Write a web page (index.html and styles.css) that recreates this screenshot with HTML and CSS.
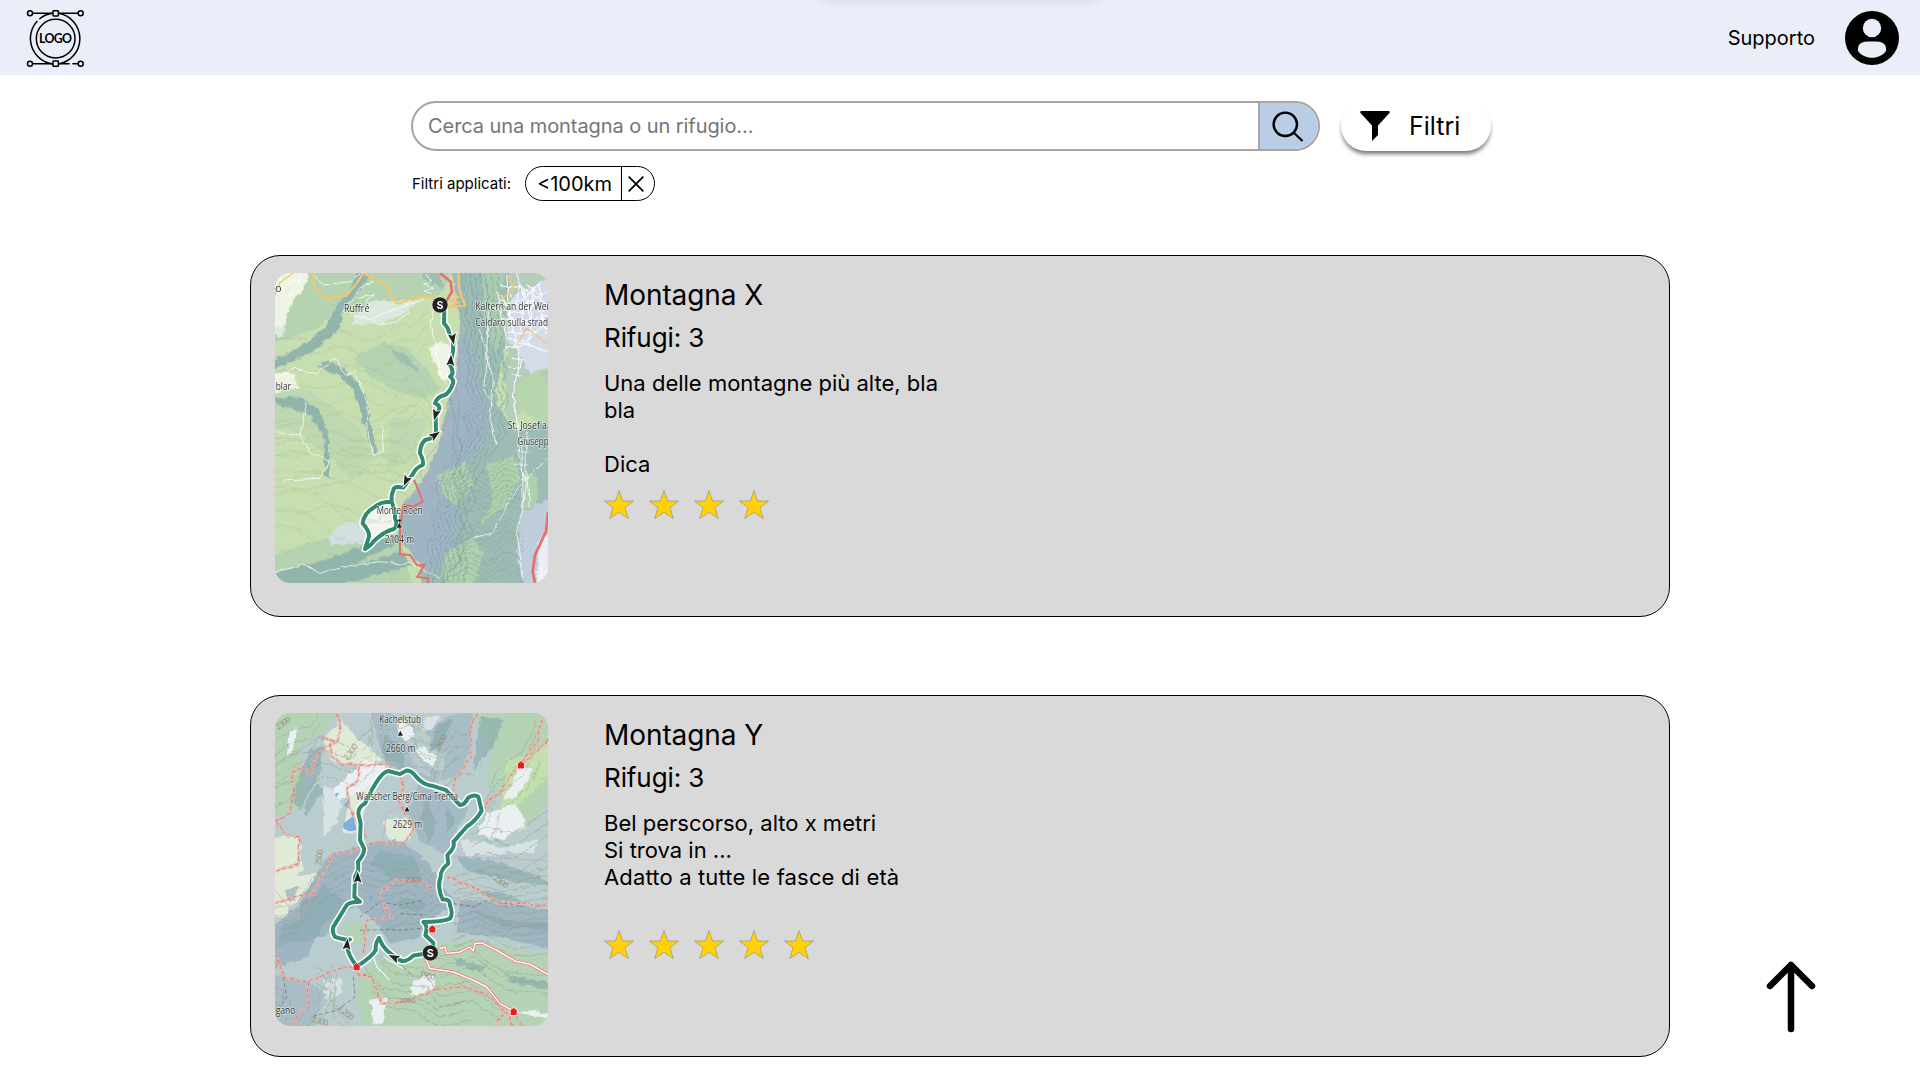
FILE: index.html
```html
<!DOCTYPE html>
<html lang="it">
<head>
<meta charset="utf-8">
<title>Montagne e rifugi</title>
<link rel="stylesheet" href="styles.css">
</head>
<body>
<svg class="defs" width="0" height="0" aria-hidden="true">
  <defs>
  <filter id="relief" x="-5%" y="-5%" width="110%" height="110%"><feTurbulence type="fractalNoise" baseFrequency=".05" numOctaves="3" seed="4"/><feDisplacementMap in="SourceGraphic" scale="18" xChannelSelector="R" yChannelSelector="G"/><feGaussianBlur stdDeviation=".6"/></filter>
  <filter id="wobble" x="-5%" y="-5%" width="110%" height="110%"><feTurbulence type="fractalNoise" baseFrequency=".035" numOctaves="2" seed="9"/><feDisplacementMap in="SourceGraphic" scale="14" xChannelSelector="R" yChannelSelector="G"/></filter>
  <symbol id="star" viewBox="0 0 30 30"><path d="M15 .6 18.600 11H29.600L21 17.600 24.300 28.600 15 22.300 5.700 28.600 9 17.600 .4 11H11.400Z" fill="#ffd106" stroke="#8f8a70" stroke-width=".6"/></symbol>
  <circle id="start" r="24" fill="#222" stroke="#fff" stroke-opacity=".5" stroke-width="3"/>
  <path id="dir" d="M0-19 12 14 0 8-12 14Z" fill="#222" stroke="#fff" stroke-width="5" paint-order="stroke"/>
  <path id="hut" d="M0-12 12-2H9V10H-9V-2H-12Z" fill="#e5201b" stroke="#fff" stroke-width="3" paint-order="stroke"/>
  <path id="peak" d="M0-8 8 7H-8Z" fill="#222" stroke="#fff" stroke-width="3" paint-order="stroke"/>
  </defs>
</svg>

<header class="topbar">
  <svg class="logo" viewBox="0 0 180 180" fill="none" stroke="#000" stroke-width="4.500">
    <path d="M23 13H84M100 13H159M23 164H84M100 164H134M142 164H159"/>
    <path d="M37 36A77 77 0 0 0 84 165M100 165A77 77 0 0 0 100 13M84 13A77 77 0 0 0 43 30"/>
    <circle cx="92" cy="89" r="58"/>
    <circle cx="15" cy="13" r="7.500"/><circle cx="167" cy="13" r="7.500"/>
    <circle cx="15" cy="164" r="7.500"/><circle cx="167" cy="164" r="7.500"/>
    <rect x="84" y="5" width="16" height="16" rx="2"/><rect x="84" y="156" width="16" height="16" rx="2"/>
    <text x="42" y="102" textLength="99" class="logo-text">LOGO</text>
  </svg>
  <div class="drawer-edge"></div>
  <nav class="account">
    <a class="support">Supporto</a>
    <svg class="avatar" viewBox="0 0 54 54"><circle cx="27" cy="27" r="27"/><circle cx="27" cy="17" r="9.200" fill="#e9eef9"/><path d="M13 40C12 34 16 30.500 22 30.500H32C38 30.500 42 34 41 40 35 49 19 49 13 40Z" fill="#e9eef9"/></svg>
  </nav>
</header>

<main>
  <section class="tools">
    <div class="search-row">
      <div class="search">
        <span class="placeholder">Cerca una montagna o un rifugio...</span>
        <span class="search-btn"><svg width="32" height="32" viewBox="0 0 32 32" fill="none" stroke="#000" stroke-width="2.400"><circle cx="13.300" cy="13.300" r="11.700"/><path d="M21 21 30.500 30"/></svg></span>
      </div>
      <button class="filter-btn"><svg width="30" height="30" viewBox="0 0 30 30"><path d="M1 0H29Q30.500 1 29 2.500L18 14.500V24L12 30V14.500L1 2.500Q-.5 1 1 0Z"/></svg><span>Filtri</span></button>
    </div>
    <div class="applied">
      <span class="applied-label">Filtri applicati:</span>
      <span class="chip"><span class="chip-text">&lt;100km</span><span class="chip-x"><svg width="16" height="16" viewBox="0 0 16 16" stroke="#000" stroke-width="1.800"><path d="M.7.7 15.300 15.300M15.300.7.7 15.300"/></svg></span></span>
    </div>
  </section>

  <article class="card">
    <svg class="map map-x" viewBox="105 84 819 930" fill="none" preserveAspectRatio="none">
      <rect x="105" y="84" width="819" height="930" fill="#c6deb0"/>
      <!-- valleys and shaded woodland -->
      <g filter="url(#relief)">
      <g fill="#b5d3b1">
        <path d="M90 70H640L600 150 540 160 420 180 300 190 230 250 90 300Z"/>
        <path d="M90 440 190 430 270 480 350 540 400 640 330 700 260 620 170 560 90 540Z" opacity=".5"/>
        <path d="M340 340 430 290 500 310 560 370 600 430 560 460 470 440 400 400Z"/>
        <path d="M90 930 250 880 370 900 480 870 520 1030H90Z"/>
        <path d="M450 520 560 520 520 640 440 680Z" opacity=".5"/>
      </g>
      <g fill="#8fb5ad">
        <path d="M350 70 390 90 350 150 310 190 300 250 220 320 90 380V350L190 300 260 240 290 180 330 140Z"/>
        <path d="M260 345 310 370 350 410 380 460 395 550 415 630 400 620 370 530 345 440 300 390 235 365Z"/>
        <path d="M90 460 180 455 240 500 265 560 270 700 255 690 250 570 210 510 90 470Z"/>
        <path d="M440 300 500 330 540 385 480 350Z" opacity=".6"/>
        <path d="M90 985 270 940 400 890 470 870 480 890 400 930 330 960 380 950 480 920 520 960 260 1030H90Z"/>
        <path d="M540 70H600L610 130 560 110Z" opacity=".6"/>
      </g>
      <path d="M90 70H215L190 130 150 180 130 250 90 250ZM90 385 150 380 180 430 90 445ZM565 305 615 290 640 320 620 410 600 400Z" fill="#eef4e4"/>
      <path d="M390 170 540 165 500 200 430 235 340 240 340 215ZM105 250 140 240 130 270 105 280Z" fill="#dbe8df"/>
      <path d="M265 875 300 840 370 820 400 850 440 850 400 900 350 895 270 900Z" fill="#d3e0e2"/>
      <path d="M385 800 450 765 475 820 440 865 400 890 370 850Z" fill="#f2f4ee"/>
      <!-- eastern escarpment -->
      <path d="M635 70H830L800 200 790 330 760 450 820 560 940 520V1030H545L540 960 470 870 480 790 560 690 600 590 625 470 655 380 660 230Z" fill="#9dbcb5"/>
      <path d="M660 240 700 330 720 430 760 520 720 600 680 660 650 720 660 830 640 930 560 990 500 900 485 800 555 700 600 585 640 450Z" fill="#a0b5c3"/>
      <path d="M720 70H800L780 160 800 260 770 330 730 230ZM800 330 830 380 800 420 780 380Z" fill="#a9cbb0"/>
      <path d="M590 690 680 650 700 720 650 780 605 750ZM740 660 820 630 840 700 800 780 720 840 760 760ZM850 680 895 700 890 780 850 790ZM620 920 700 880 730 930 700 1030H600Z" fill="#afd0ad"/>
      <path d="M810 70H940V560L860 480 810 540 790 470 810 360 790 260Z" fill="#b5ceba"/>
      <path d="M820 150 940 95V360L870 390 840 330 800 280 810 200Z" fill="#d4dcea"/>
      <path d="M830 420 900 370 925 430V540L830 490Z" fill="#b8d6ad"/>
      <path d="M840 800 940 760V1030H850L830 920Z" fill="#bfcddd"/>
      <path d="M895 890 940 850V1030H890Z" fill="#ebeef6"/>
      </g>
      <!-- contour lines -->
      <g filter="url(#relief)">
      <g stroke="#a8b990" stroke-width="2" stroke-opacity=".6">
        <path id="cx" d="M90 300C160 250 200 310 260 270S350 300 400 285 460 230 500 240 540 210 560 200M90 400C160 340 220 410 310 370S460 440 500 400 560 430 590 460M90 520C160 460 240 500 300 560S440 560 490 600 520 580 540 560"/>
        <use href="#cx" y="45"/><use href="#cx" y="95"/><use href="#cx" y="245"/><use href="#cx" x="-30" y="300"/><use href="#cx" x="-50" y="350"/><use href="#cx" x="-80" y="420"/>
      </g>
      <g stroke="#7898a1" stroke-width="2" stroke-opacity=".85">
        <path id="ex" d="M660 70 672 150 664 210 680 260 668 320 690 370 678 420 700 470 670 520 690 560 660 610 630 640 610 700 585 720 600 770 570 810 590 860 560 900 575 960 560 1030"/>
        <use href="#ex" x="14"/><use href="#ex" x="28"/><use href="#ex" x="42"/><use href="#ex" x="56"/><use href="#ex" x="72"/><use href="#ex" x="90"/><use href="#ex" x="108"/><use href="#ex" x="-14" y="350"/><use href="#ex" x="-28" y="380"/>
      </g>
      <g stroke="#91a99a" stroke-width="2">
        <path id="gx" d="M640 700 700 660 740 690 790 640 830 650M650 750 690 730 740 760 800 720 850 730M660 860 720 830 760 860 810 820 850 860M620 950 690 920 740 950 800 920 850 950"/>
        <use href="#gx" y="16"/><use href="#gx" y="32"/><use href="#gx" y="48"/><use href="#gx" y="64"/>
      </g>
      </g>
      <!-- local roads -->
      <g filter="url(#wobble)">
      <g stroke="#fff" stroke-width="2.600" stroke-opacity=".85">
        <path d="M105 400 165 370 230 385 285 340 320 395 345 375 380 470 385 570 400 630 430 620 425 540"/>
        <path d="M215 84 250 120 330 110 370 84M330 210 390 220 460 195 550 165M390 220 420 240 470 230 510 200M580 190 570 240 590 300 600 380 620 420M555 84 575 110 550 115 578 130 552 138 575 145"/>
        <path d="M105 90 140 120 185 95 150 150 195 130 160 100M120 84 130 160 105 140M310 200 360 130 400 110M350 160 405 150 375 175"/>
        <path d="M745 200 740 340 760 410 750 520 770 600M720 250 745 330 730 430 760 480"/>
        <path d="M105 560 180 570 210 620 270 650 240 700 130 705M105 980 190 960 240 985 340 960 420 950 520 960 600 1000M180 570 200 470"/>
        <path d="M700 880 760 860 800 780 840 720 920 640M835 560 840 650 860 720 830 860 850 1000M845 580 850 790M862 560 855 640 870 790M830 620H870M825 660H865M835 700H862"/>
      </g>
      <g stroke="#fff" stroke-width="3">
        <path d="M780 120 850 130 924 180M770 160 830 190 924 140M800 90 810 220 840 330 820 450 835 560M850 130 870 220 924 250M790 200 850 160 910 110M800 240 924 210M830 84 850 150 900 200 924 270M770 140 800 280 924 320M880 130 870 290M900 120 910 230M795 310 850 300 910 240M760 190 850 205M815 340 845 345 840 370 805 365M815 390H840M780 150 830 250M840 110 830 180 890 175M860 120 900 150"/>
        <path d="M780 180 820 170M790 220 880 240M805 265 890 260M810 150 850 200 840 260M820 310 835 280 870 300M885 985 905 970 900 1000M905 1000 924 975"/>
      </g>
      </g>
      <!-- main roads -->
      <g stroke="#f5c66b" stroke-width="6" stroke-linejoin="round">
        <path d="M215 84 225 130 265 168 280 155 320 152 350 115 370 84 440 120 460 165 475 177 520 157 580 155 600 170M655 84 657 130 675 182 625 185 655 172 630 168 655 155 640 150"/>
        <path d="M160 84 120 112 105 150M805 90 820 130 785 165M830 300 860 250 924 298" stroke-width="4"/>
      </g>
      <g stroke="#e96f6a" stroke-width="8">
        <path d="M600 84 632 110 636 140 618 170"/>
        <path d="M522 705 535 735 548 770 520 785 490 780 480 850 480 928 510 930 532 962 554 958 532 996 564 1000V1014" stroke-width="6"/>
        <path d="M924 800 918 860 885 930 878 980 885 1014"/>
      </g>
      <path d="M655 310 660 400 620 480 625 510 600 590 560 640 540 690 583 740 570 765" stroke="#c98fb2" stroke-width="2"/>
      <!-- hiking trail -->
      <g stroke-linejoin="round" stroke-linecap="round">
        <path id="trail-x" class="casing" d="M613 190 612 235Q627 250 627 265L640 290 639 320 630 360Q645 385 630 395 645 405 637 420 630 440 615 450 590 455 585 475 600 480 598 492L587 515 588 560Q585 580 555 585 540 600 540 625 553 650 548 660 525 670 520 685L490 728Q462 722 460 735 453 750 455 770 420 770 405 785 370 805 368 835 390 860 387 875L375 912Q395 900 400 890 430 860 462 852 475 840 465 820L465 800 455 770"/>
        <path class="track" d="M613 190 612 235Q627 250 627 265L640 290 639 320 630 360Q645 385 630 395 645 405 637 420 630 440 615 450 590 455 585 475 600 480 598 492L587 515 588 560Q585 580 555 585 540 600 540 625 553 650 548 660 525 670 520 685L490 728Q462 722 460 735 453 750 455 770 420 770 405 785 370 805 368 835 390 860 387 875L375 912Q395 900 400 890 430 860 462 852 475 840 465 820L465 800 455 770"/>
      </g>
      <use href="#dir" transform="translate(638 280) rotate(170)"/>
      <use href="#dir" transform="translate(632 348) rotate(5)"/>
      <use href="#dir" transform="translate(587 508) rotate(195)"/>
      <use href="#dir" transform="translate(584 571) rotate(55)"/>
      <use href="#dir" transform="translate(499 706) rotate(205)"/>
      <use href="#start" x="600" y="180"/><text x="600" y="191" text-anchor="middle" class="start-letter">S</text>
      <path d="M478 823V850M472 826H484" stroke="#222" stroke-width="3"/><use href="#peak" x="478" y="841"/>
      <g class="place">
        <text x="105" y="142">o</text>
        <text x="312" y="200" textLength="76" lengthAdjust="spacingAndGlyphs">Ruffré</text>
        <text x="706" y="195" textLength="236" lengthAdjust="spacingAndGlyphs">Kaltern an der Wein</text>
        <text x="706" y="242" textLength="232" lengthAdjust="spacingAndGlyphs">Caldaro sulla strada</text>
        <text x="107" y="434" textLength="46" lengthAdjust="spacingAndGlyphs">blar</text>
        <text x="803" y="552" textLength="118" lengthAdjust="spacingAndGlyphs">St. Josef a</text>
        <text x="832" y="600" textLength="108" lengthAdjust="spacingAndGlyphs">Giuseppe</text>
        <text x="410" y="806" textLength="137" lengthAdjust="spacingAndGlyphs">Monte Roen</text>
        <text x="434" y="893" textLength="88" lengthAdjust="spacingAndGlyphs">2104 m</text>
      </g>
    </svg>
    <div class="info">
      <h2>Montagna X</h2>
      <h3>Rifugi: 3</h3>
      <p>Una delle montagne più alte, bla<br>bla<br><br>Dica</p>
      <div class="stars"><svg><use href="#star"/></svg><svg><use href="#star"/></svg><svg><use href="#star"/></svg><svg><use href="#star"/></svg></div>
    </div>
  </article>

  <article class="card">
    <svg class="map map-y" viewBox="105 69 819 938" fill="none" preserveAspectRatio="none">
      <rect x="105" y="69" width="819" height="938" fill="#b9cdcf"/>
      <!-- meadows, scree and rock -->
      <g filter="url(#relief)">
      <g fill="#b4d2b4">
        <path d="M90 55H290L260 120 190 160 150 220 90 250Z"/>
        <path d="M700 55H940V330L850 420 760 390 790 330 740 280 760 180 720 130Z"/>
        <path d="M590 760 700 750 940 800V1020H380L340 900 380 830 460 800Z"/>
        <path d="M430 560 500 600 520 640 440 680 410 620ZM310 700 400 690 370 760 330 760ZM90 220 180 190 200 340 90 390Z"/>
      </g>
      <g fill="#e0ebd7">
        <path d="M300 90 360 150 430 210 360 230 270 210 250 150ZM90 440 175 440 190 540 140 570 90 560ZM330 300 400 290 350 430 310 430ZM430 390 520 380 510 450 450 460ZM90 560 240 550 200 600 130 680 90 680Z"/>
        <path d="M800 210 850 200 940 150V240L840 340 780 370Z" fill="#c4dfae"/>
      </g>
      <g fill="#eaf0f2">
        <path d="M370 210 440 230 390 290 350 310 300 330 280 300ZM510 190 550 170 590 200 570 260 520 240ZM740 370 830 340 860 410 780 450 710 430ZM480 90 530 130 510 150 470 140ZM840 230 880 240 830 320 790 330ZM520 870 580 850 590 890 510 920ZM390 930 440 920 430 1000H400ZM880 960 940 970V985L830 970ZM150 120 175 110 160 170 140 200Z"/>
        <path d="M250 290 310 310 290 400 250 440ZM660 450 750 460 800 490 680 500ZM560 80 600 75 570 130 545 120ZM740 480 900 450 880 490ZM250 870 300 860 310 910 260 930ZM390 590 430 580 400 640 370 640Z" opacity=".6"/>
      </g>
      <g fill="#9fb6c2">
        <path d="M390 55H450L480 140 540 200 600 250 580 290 490 230 430 200 410 140Z" opacity=".7"/>
        <path d="M560 130 620 80 700 55 690 170 660 260 600 270 620 190 580 180Z" opacity=".65"/>
        <path d="M260 500 380 460 480 450 560 510 600 580 650 640 560 700 420 710 350 650 250 700 200 800 90 840V720L180 640Z"/>
        <path d="M540 270 690 350 640 440 620 500 540 450 500 370Z" opacity=".8"/>
        <path d="M660 630 800 640 940 660V780L780 740 650 730Z"/>
        <path d="M90 850 200 870 260 910 210 1020H90Z" opacity=".7"/>
      </g>
      <g fill="#87a9ad" opacity=".6">
        <path d="M440 130 480 170 500 240 450 230 425 190ZM590 100 640 90 600 170 570 190ZM180 640 250 590 330 640 270 730 180 760ZM420 480 520 500 550 580 460 570 390 520ZM650 500 760 510 900 560 940 590 800 570 680 540ZM690 660 800 690 940 700V720L790 710ZM210 180 250 170 240 250 180 360 150 330ZM420 710 550 690 540 740 450 760Z"/>
        <path d="M720 80 790 90 760 170 700 240ZM130 700 250 680 210 740 110 770ZM790 850 940 880V900L820 880ZM560 320 590 400 570 460 540 380ZM620 350 650 390 620 430ZM130 600 180 590 150 640ZM480 620 560 640 540 670 470 650ZM720 600 800 610 860 640 760 630ZM640 800 740 830 720 850 650 820ZM230 280 250 300 200 380 190 350Z"/>
      </g>
      </g>
      <path d="M310 400 340 378 350 420 330 424 310 415ZM312 345 330 320 325 355ZM285 310 298 308 288 322Z" fill="#7eaee0"/>
      <path d="M393 610 400 622 393 632 386 622Z" fill="#7eaee0"/>
      <!-- contour lines -->
      <g filter="url(#relief)" stroke="#8f9c87" stroke-width="2" stroke-opacity=".7">
        <path id="cy" d="M90 170 150 120 210 110 240 60M90 230 180 180 240 140 330 170 390 120 400 60M420 60 440 120 520 110 570 130M510 60 540 110 590 130 640 80M580 240 600 170 650 130 690 140M740 330 770 240 850 180 890 90M690 430 740 410 820 430 940 350"/>
        <use href="#cy" y="38"/><use href="#cy" y="76"/><use href="#cy" x="14" y="118"/>
        <path id="dy" d="M640 560 720 540 790 560 940 530M640 610 720 600 800 650 940 640M640 680 720 660 820 710 940 700M430 640 500 600 560 650 600 620M90 660 170 640 220 560 330 500 430 530 520 510 580 560"/>
        <use href="#dy" y="22"/><use href="#dy" y="44"/><use href="#dy" y="66"/><use href="#dy" y="88"/>
        <path id="fy" d="M410 800 460 850 560 860 600 920 700 900 780 960M390 860 440 920 520 930 600 980 690 960M600 830 700 800 800 870 940 880M230 850 280 880 260 930 190 1020M290 850 280 950 330 1000M90 900 150 930 130 980"/>
        <use href="#fy" y="30"/><use href="#fy" x="-14" y="-26"/>
      </g>
      <path d="M105 600 180 690 250 560M430 440 440 370 490 345M520 410 580 470 640 498 924 512" stroke="#c9a0cb" stroke-width="2"/>
      <path d="M480 670 560 675M360 680 420 635 480 645 550 630M360 720 440 718 480 720 550 714M640 640 700 650 740 630 800 640 850 650M340 860 345 920 290 960 210 980M130 860 140 920 120 950M490 830 520 860" stroke="#667" stroke-width="2" stroke-dasharray="12 7"/>
      <!-- secondary trails -->
      <g stroke-linejoin="round" filter="url(#wobble)">
        <path stroke="#f3b2aa" stroke-opacity=".65" stroke-width="9" d="M290 69 303 120 290 155 240 143M290 155 240 180 210 250 190 230 155 245 160 320 150 370 105 390 140 435 180 440 175 520 105 545M270 160 275 200 310 225 370 225 440 220 480 260 490 290 480 330 490 370 520 400 510 440 480 465 410 455 360 470 330 480 275 500 240 570 220 610 170 620 105 640M360 230 355 270 320 300 330 350 345 380 380 440M710 69 690 130 695 200 650 260 640 310M910 69 895 150 842 220 770 320 745 330 730 370M924 150 850 220M412 610 470 570 530 570 580 595M412 610 455 680 380 690 370 790M620 560 700 590 780 640 850 640 924 650M105 790 130 860 205 875 310 830 360 835M205 875 205 940 150 1007M350 850 395 860 425 940 510 930 590 895 670 890 750 920 805 975 820 1007M790 970 765 1007M830 980 850 1007"/>
        <path stroke="#cc7573" stroke-width="2.500" stroke-dasharray="12 7" d="M290 69 303 120 290 155 240 143M290 155 240 180 210 250 190 230 155 245 160 320 150 370 105 390 140 435 180 440 175 520 105 545M270 160 275 200 310 225 370 225 440 220 480 260 490 290 480 330 490 370 520 400 510 440 480 465 410 455 360 470 330 480 275 500 240 570 220 610 170 620 105 640M360 230 355 270 320 300 330 350 345 380 380 440M710 69 690 130 695 200 650 260 640 310M910 69 895 150 842 220 770 320 745 330 730 370M924 150 850 220M412 610 470 570 530 570 580 595M412 610 455 680 380 690 370 790M620 560 700 590 780 640 850 640 924 650M105 790 130 860 205 875 310 830 360 835M205 875 205 940 150 1007M350 850 395 860 425 940 510 930 590 895 670 890 750 920 805 975 820 1007M790 970 765 1007M830 980 850 1007"/>
      </g>
      <g stroke-linejoin="round">
        <path d="M550 790 570 835 640 845 700 870 740 890 780 940 820 962M600 775 615 770 620 790 660 785 690 770 700 782 705 760 725 758 770 780 825 812 870 822 924 852" stroke="#f3b2aa" stroke-opacity=".6" stroke-width="14"/>
        <path d="M550 790 570 835 640 845 700 870 740 890 780 940 820 962M600 775 615 770 620 790 660 785 690 770 700 782 705 760 725 758 770 780 825 812 870 822 924 852" stroke="#c77672" stroke-width="8"/>
        <path d="M550 790 570 835 640 845 700 870 740 890 780 940 820 962M600 775 615 770 620 790 660 785 690 770 700 782 705 760 725 758 770 780 825 812 870 822 924 852" stroke="#fff" stroke-width="4.500"/>
        <path d="M395 780 410 830 450 870M430 800 490 835" stroke="#fff" stroke-width="3"/>
      </g>
      <!-- hiking trail -->
      <g stroke-linejoin="round" stroke-linecap="round">
        <path class="casing" d="M570 788 520 796Q500 815 485 812L470 805 440 780Q425 765 417 743 405 760 407 780 395 800 352 828 325 800 322 770 315 750 330 748 315 750 285 740 275 725 280 710L320 645Q330 635 360 635L343 620 345 560 355 540 354 515Q375 490 372 475L360 450 362 400 355 370Q355 350 375 340L395 300 410 275Q430 245 445 243L480 252 500 241Q515 240 530 262 550 285 580 288L618 300Q645 330 660 345 675 345 685 322 705 312 715 320L725 362Q710 390 680 410L640 455Q648 470 622 495L625 520Q600 540 602 560 590 590 608 628 630 625 630 645 640 670 630 685 605 695 550 695 565 705 556 735L580 758 580 775"/>
        <path class="track" d="M570 788 520 796Q500 815 485 812L470 805 440 780Q425 765 417 743 405 760 407 780 395 800 352 828 325 800 322 770 315 750 330 748 315 750 285 740 275 725 280 710L320 645Q330 635 360 635L343 620 345 560 355 540 354 515Q375 490 372 475L360 450 362 400 355 370Q355 350 375 340L395 300 410 275Q430 245 445 243L480 252 500 241Q515 240 530 262 550 285 580 288L618 300Q645 330 660 345 675 345 685 322 705 312 715 320L725 362Q710 390 680 410L640 455Q648 470 622 495L625 520Q600 540 602 560 590 590 608 628 630 625 630 645 640 670 630 685 605 695 550 695 565 705 556 735L580 758 580 775"/>
      </g>
      <use href="#dir" transform="translate(353 564)"/>
      <use href="#dir" transform="translate(321 764) rotate(6)"/>
      <use href="#dir" transform="translate(463 802) rotate(-65)"/>
      <use href="#start" x="571" y="788"/><text x="571" y="799" text-anchor="middle" class="start-letter">S</text>
      <use href="#hut" x="843" y="225"/><use href="#hut" x="577" y="717"/><use href="#hut" x="350" y="830"/><use href="#hut" x="821" y="964"/>
      <use href="#peak" x="481" y="130"/><use href="#peak" x="501" y="357"/>
      <g class="alt">
        <text transform="translate(114 120) rotate(-35)">2300</text><text transform="translate(322 212) rotate(-52)">2,300</text><text transform="translate(598 182) rotate(-60)">2600</text><text transform="translate(242 527) rotate(-82)">2500</text><text x="496" y="575">2300</text><text transform="translate(758 567) rotate(35)">2300</text><text transform="translate(536 857) rotate(15)">1900</text><text x="477" y="939">2000</text><text transform="translate(292 957) rotate(40)">1,200</text><text transform="translate(215 994) rotate(15)">2300</text>
      </g>
      <g class="place">
        <text x="418" y="98" textLength="125" lengthAdjust="spacingAndGlyphs">Kachelstub</text>
        <text x="438" y="186" textLength="88" lengthAdjust="spacingAndGlyphs">2660 m</text>
        <text x="349" y="329" textLength="305" lengthAdjust="spacingAndGlyphs">Walscher Berg/Cima Trenta</text>
        <text x="458" y="415" textLength="88" lengthAdjust="spacingAndGlyphs">2629 m</text>
        <text x="107" y="970" textLength="59" lengthAdjust="spacingAndGlyphs">gano</text>
      </g>
    </svg>
    <div class="info">
      <h2>Montagna Y</h2>
      <h3>Rifugi: 3</h3>
      <p>Bel perscorso, alto x metri<br>Si trova in ...<br><span class="ages">Adatto a tutte le fasce di età</span></p>
      <div class="stars"><svg><use href="#star"/></svg><svg><use href="#star"/></svg><svg><use href="#star"/></svg><svg><use href="#star"/></svg><svg><use href="#star"/></svg></div>
    </div>
  </article>
</main>

<a class="to-top"><svg width="50" height="72" viewBox="0 0 50 72" fill="none" stroke="#000" stroke-width="6.500" stroke-linecap="round" stroke-linejoin="round"><path d="M25 68V4M4 25 25 4 46 25"/></svg></a>
</body>
</html>
```
FILE: styles.css
```css
* { box-sizing: border-box; }
body {
  margin: 0;
  height: 1080px;
  overflow: hidden;
  background: #fff;
  color: #000;
  font-family: Inter, "Liberation Sans", sans-serif;
}
.defs { position: absolute; }
svg { display: block; flex: none; }

.topbar {
  position: relative;
  overflow: hidden;
  display: flex;
  justify-content: space-between;
  align-items: flex-start;
  height: 75px;
  padding: 9px 21px 0 25px;
  background: #e9eef9;
}
.logo { width: 60px; height: 60px; }
.logo-text { font: 700 37px Lato, sans-serif; fill: #000; stroke: none; }
.drawer-edge {
  position: absolute;
  left: 823px;
  top: -20px;
  width: 274px;
  height: 18px;
  box-shadow: 0 2px 12px rgba(0, 0, 0, .1);
}
.account { display: flex; align-items: center; gap: 30px; padding-top: 2px; }
.support { font-size: 20px; line-height: 24px; }
.avatar { width: 54px; height: 54px; }

.tools { width: 1100px; margin: 26px 0 0 411px; }
.search-row { display: flex; gap: 21px; }
.search {
  display: flex;
  width: 909px;
  height: 50px;
  border: 2px solid #a7a4a2;
  border-radius: 25px;
  overflow: hidden;
}
.placeholder { flex: 1; padding-left: 15px; font-size: 20px; line-height: 46px; letter-spacing: -.07px; color: #757575; }
.search-btn {
  width: 60px;
  padding: 8px 0 0 12px;
  background: #b9cde6;
  border-left: 2px solid #a7a4a2;
}
.filter-btn {
  display: flex;
  align-items: center;
  gap: 19px;
  width: 150px;
  height: 50px;
  padding: 0 0 0 19px;
  border: 0;
  border-radius: 25px;
  background: #fff;
  color: #000;
  font: 25px Inter, sans-serif;
  box-shadow: 0 4px 4px -1px rgba(0, 0, 0, .55);
}
.applied { display: flex; align-items: center; height: 35px; margin-top: 15px; }
.applied-label { width: 114px; padding-left: 1px; font-size: 15px; }
.chip { display: flex; width: 130px; height: 35px; border: 1px solid #000; border-radius: 18px; }
.chip-text { width: 95px; padding-left: 11px; font-size: 20px; line-height: 34px; }
.chip-x { display: flex; align-items: center; padding-left: 6px; border-left: 1px solid #000; }

.card {
  display: flex;
  gap: 56px;
  width: 1420px;
  height: 362px;
  margin: 54px 0 0 250px;
  padding: 17px 24px;
  border: 1px solid #000;
  border-radius: 30px;
  background: #d9d9d9;
}
.card + .card { margin-top: 78px; }
.map { width: 273px; border-radius: 15px; overflow: hidden; }
.map-x { height: 310px; }
.map-y { height: 313px; }
.casing { stroke: #fff; stroke-width: 21px; }
.track { stroke: #31896f; stroke-width: 12px; }
.place { font: 500 33px "Open Sans", sans-serif; fill: #333; stroke: #fff; stroke-opacity: .65; stroke-width: 4px; paint-order: stroke; }
.alt { font: 24px "Open Sans", sans-serif; fill: #978c75; letter-spacing: -2px; }
.start-letter { font: 700 32px Inter, sans-serif; fill: #fff; }
.info { padding-top: 5px; }
.info h2, .info h3, .info p { margin: 0; font-weight: 400; }
.info h2 { font-size: 28px; line-height: 34px; letter-spacing: -.08px; }
.info h3 { margin-top: 10px; font-size: 26px; line-height: 32px; letter-spacing: -.1px; }
.info p { height: 108px; margin-top: 16px; font-size: 22px; line-height: 27px; }
.ages { letter-spacing: .16px; }
.stars { display: flex; gap: 15px; margin-top: 12px; }
.stars svg { width: 30px; height: 30px; }

.to-top { position: fixed; left: 1766px; top: 961px; }
```
